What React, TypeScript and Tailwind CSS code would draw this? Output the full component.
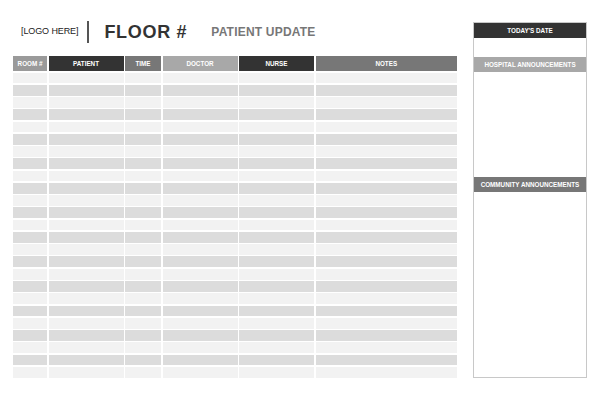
const columns = [
  { label: "ROOM #", bg: "bg-[#9a9a9a]" },
  { label: "PATIENT", bg: "bg-[#333333]" },
  { label: "TIME", bg: "bg-[#777777]" },
  { label: "DOCTOR", bg: "bg-[#a8a8a8]" },
  { label: "NURSE", bg: "bg-[#333333]" },
  { label: "NOTES", bg: "bg-[#777777]" },
];

const rows = Array.from({ length: 25 }, (_, i) => i);

function PanelHeader({ label, bg }: { label: string; bg: string }) {
  return (
    <div
      className={`h-[15px] flex items-center justify-center text-white font-bold text-[6.3px] ${bg}`}
    >
      {label}
    </div>
  );
}

export default function App() {
  return (
    <div className="w-[600px] h-[400px] bg-white flex font-['Liberation_Sans',Arial,sans-serif]">
      <div className="ml-[13px] w-[444px] flex flex-col">
        <div className="h-[56px] pt-[21px]">
          <div className="h-[22px] flex items-center">
            <span className="ml-[8px] text-[9px] text-[#222] tracking-[-0.1px]">[LOGO HERE]</span>
            <div className="ml-[9px] w-[2px] h-[22px] bg-[#555]" />
            <span className="ml-[15px] text-[18px] font-bold text-[#333] tracking-[0.7px] leading-none">
              FLOOR #
            </span>
            <span className="ml-[24px] text-[12px] font-bold text-[#777] tracking-[0.2px] leading-none">
              PATIENT UPDATE
            </span>
          </div>
        </div>

        <div className="grid grid-cols-[34px_75px_36px_75px_75px_1fr] gap-[1.5px]">
          {columns.map((c) => (
            <div
              key={c.label}
              className={`h-[15px] flex items-center justify-center text-white font-bold text-[6.3px] ${c.bg}`}
            >
              {c.label}
            </div>
          ))}
          {rows.map((r) =>
            columns.map((c) => (
              <div
                key={`${r}-${c.label}`}
                className={`h-[10.78px] ${r % 2 === 0 ? "bg-[#f2f2f2]" : "bg-[#dcdcdc]"}`}
              />
            ))
          )}
        </div>
      </div>

      <div className="ml-[16px] mt-[22px] w-[114px] h-[356px] border border-[#c8c8c8] flex flex-col">
        <PanelHeader label="TODAY'S DATE" bg="bg-[#333333]" />
        <div className="h-[19px]" />
        <PanelHeader label="HOSPITAL ANNOUNCEMENTS" bg="bg-[#a8a8a8]" />
        <div className="h-[105px]" />
        <PanelHeader label="COMMUNITY ANNOUNCEMENTS" bg="bg-[#777777]" />
      </div>
    </div>
  );
}
